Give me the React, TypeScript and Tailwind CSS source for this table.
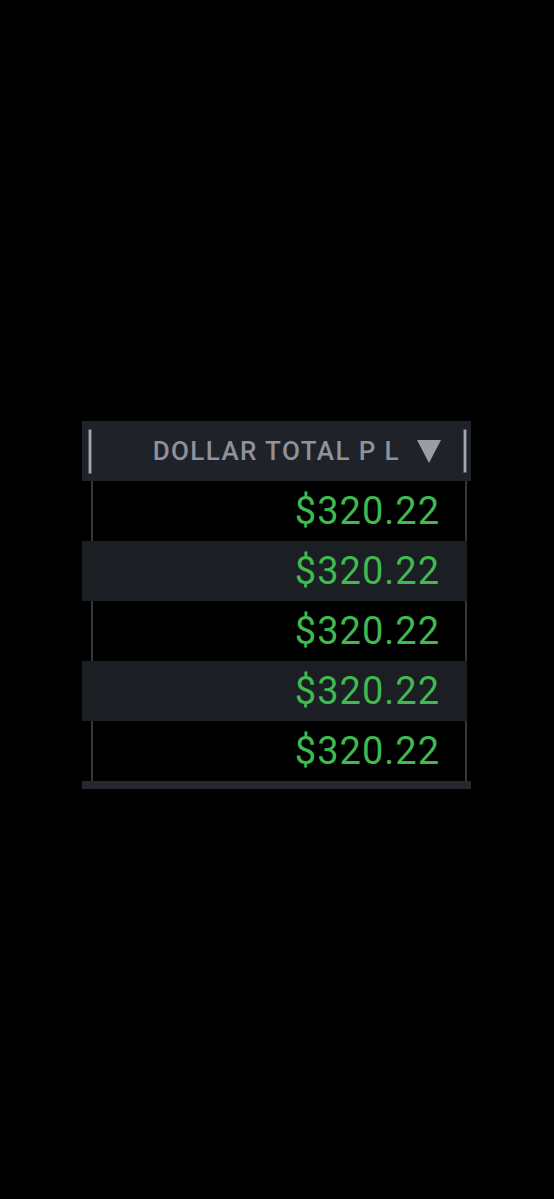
const rows = ["$320.22", "$320.22", "$320.22", "$320.22", "$320.22"];

function SortArrow() {
  return (
    <svg width="24" height="23" viewBox="0 0 24 23" className="shrink-0">
      <path d="M0 0 H24 L12 23 Z" fill="#9a9da2" />
    </svg>
  );
}

export default function App() {
  return (
    <div
      className="min-h-[1199px] w-full bg-black pt-[421px] pl-[82px]"
      style={{ fontFamily: "Roboto, 'Liberation Sans', sans-serif" }}
    >
      <div className="w-[389px]">
        <div className="flex h-[60px] items-center bg-[#1f2229] pl-[6px] pr-[4px]">
          <div className="h-[45px] w-[4px] rounded-[1px] border border-[#55585e] bg-[#a3a6ab]" />
          <div className="flex flex-1 items-center justify-end gap-[17px] pr-[22px]">
            <span className="text-[26px] font-medium leading-none tracking-[1.4px] text-[#8e9299]">
              DOLLAR TOTAL P L
            </span>
            <SortArrow />
          </div>
          <div className="h-[44px] w-[4px] rounded-[1px] border border-[#55585e] bg-[#a3a6ab]" />
        </div>

        <div className="flex flex-col">
          {rows.map((value, i) =>
            i % 2 === 1 ? (
              <div key={i} className="flex h-[60px] w-[385px] items-center justify-end bg-[#1b1e23] pr-[27px]">
                <span className="text-[38px] leading-none tracking-[1px] text-[#3fb950]">{value}</span>
              </div>
            ) : (
              <div
                key={i}
                className="ml-[9px] flex h-[60px] w-[376px] items-center justify-end border-x-2 border-[#33363b] pr-[25px]"
              >
                <span className="text-[38px] leading-none tracking-[1px] text-[#3fb950]">{value}</span>
              </div>
            )
          )}
        </div>

        <div className="h-[8px] w-full bg-[#25282e]" />
      </div>
    </div>
  );
}
